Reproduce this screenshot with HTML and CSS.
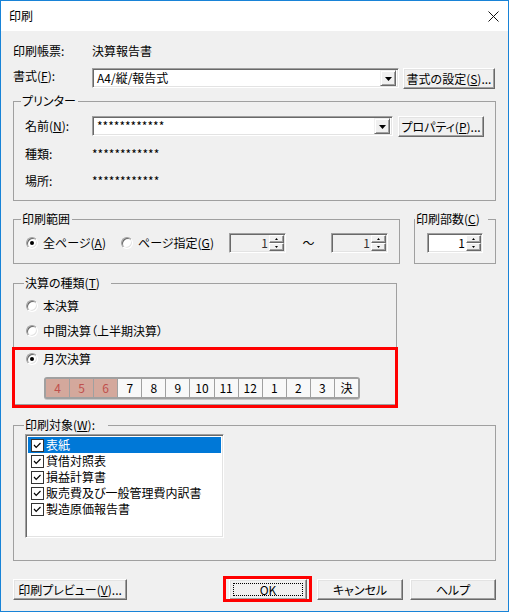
FILE: index.html
```html
<!DOCTYPE html>
<html lang="ja">
<head>
<meta charset="utf-8">
<title>印刷</title>
<link rel="stylesheet" href="styles.css">
</head>
<body>
<div class="window">
  <div class="titlebar">
    <span class="title">印刷</span>
    <svg class="close" width="11" height="11" viewBox="0 0 11 11"><path d="M0.5 0.5 L10.5 10.5 M10.5 0.5 L0.5 10.5" stroke="#111" stroke-width="1" fill="none"/></svg>
  </div>
  <div class="content">
    <div class="row row-report">
      <span class="lbl lbl-top">印刷帳票:</span><span>決算報告書</span>
    </div>
    <div class="row row-format">
      <span class="lbl lbl-top">書式(<u>F</u>):</span>
      <div class="combo sunken combo-format"><span class="combo-text">A4/縦/報告式</span><span class="drop"><svg width="7" height="4" viewBox="0 0 7 4"><path d="M0 0H7L3.5 4Z" fill="#000"/></svg></span></div>
      <button class="btn btn-format">書式の設定(<u>S</u>)...</button>
    </div>

    <fieldset class="group group-printer">
      <legend class="lg-printer">プリンター</legend>
      <div class="row row-name">
        <span class="lbl lbl-printer">名前(<u>N</u>):</span>
        <div class="combo sunken combo-name"><span class="combo-text">************</span><span class="drop"><svg width="7" height="4" viewBox="0 0 7 4"><path d="M0 0H7L3.5 4Z" fill="#000"/></svg></span></div>
        <button class="btn btn-prop">プロパティ(<u>P</u>)...</button>
      </div>
      <div class="row row-info row-kind">
        <span class="lbl lbl-printer">種類:</span><span>************</span>
      </div>
      <div class="row row-info row-place">
        <span class="lbl lbl-printer">場所:</span><span>************</span>
      </div>
    </fieldset>

    <div class="pair">
      <fieldset class="group group-range">
        <legend class="lg-range">印刷範囲</legend>
        <div class="row row-range">
          <span class="opt opt-all"><span class="radio on"></span><span>全ページ(<u>A</u>)</span></span>
          <span class="opt opt-page"><span class="radio"></span><span>ページ指定(<u>G</u>)</span></span>
          <div class="spin sunken disabled"><span class="spin-val">1</span><span class="spin-btns"><span class="sb"><svg width="3" height="2" viewBox="0 0 3 2"><path d="M0 2H3L1.5 0Z" fill="#000"/></svg></span><span class="sb"><svg width="3" height="2" viewBox="0 0 3 2"><path d="M0 0H3L1.5 2Z" fill="#000"/></svg></span></span></div>
          <span class="tilde">～</span>
          <div class="spin sunken disabled"><span class="spin-val">1</span><span class="spin-btns"><span class="sb"><svg width="3" height="2" viewBox="0 0 3 2"><path d="M0 2H3L1.5 0Z" fill="#000"/></svg></span><span class="sb"><svg width="3" height="2" viewBox="0 0 3 2"><path d="M0 0H3L1.5 2Z" fill="#000"/></svg></span></span></div>
        </div>
      </fieldset>
      <fieldset class="group group-copies">
        <legend class="lg-copies">印刷部数(<u>C</u>)</legend>
        <div class="row row-range">
          <div class="spin sunken spin-copies"><span class="spin-val">1</span><span class="spin-btns"><span class="sb"><svg width="3" height="2" viewBox="0 0 3 2"><path d="M0 2H3L1.5 0Z" fill="#000"/></svg></span><span class="sb"><svg width="3" height="2" viewBox="0 0 3 2"><path d="M0 0H3L1.5 2Z" fill="#000"/></svg></span></span></div>
        </div>
      </fieldset>
    </div>

    <fieldset class="group group-type">
      <legend class="lg-type">決算の種類(<u>T</u>)</legend>
      <div class="opt opt-row"><span class="radio"></span><span>本決算</span></div>
      <div class="opt opt-row opt-mid"><span class="radio"></span><span>中間決算（上半期決算）</span></div>
      <div class="monthly">
        <div class="opt opt-row"><span class="radio on"></span><span>月次決算</span></div>
        <div class="months">
          <span class="m past">4</span><span class="m past">5</span><span class="m past">6</span><span class="m">7</span><span class="m">8</span><span class="m">9</span><span class="m">10</span><span class="m">11</span><span class="m">12</span><span class="m">1</span><span class="m">2</span><span class="m">3</span><span class="m">決</span>
        </div>
      </div>
    </fieldset>

    <fieldset class="group group-target">
      <legend class="lg-target">印刷対象(<u>W</u>):</legend>
      <div class="listbox sunken">
        <div class="item sel"><svg class="chk" width="13" height="13" viewBox="0 0 13 13"><rect x="0.5" y="0.5" width="12" height="12" fill="#fff" stroke="#333"/><path d="M3 6 L5.2 8.3 L9.5 4" stroke="#000" stroke-width="1.2" fill="none"/></svg><span>表紙</span></div>
        <div class="item"><svg class="chk" width="13" height="13" viewBox="0 0 13 13"><rect x="0.5" y="0.5" width="12" height="12" fill="#fff" stroke="#333"/><path d="M3 6 L5.2 8.3 L9.5 4" stroke="#000" stroke-width="1.2" fill="none"/></svg><span>貸借対照表</span></div>
        <div class="item"><svg class="chk" width="13" height="13" viewBox="0 0 13 13"><rect x="0.5" y="0.5" width="12" height="12" fill="#fff" stroke="#333"/><path d="M3 6 L5.2 8.3 L9.5 4" stroke="#000" stroke-width="1.2" fill="none"/></svg><span>損益計算書</span></div>
        <div class="item"><svg class="chk" width="13" height="13" viewBox="0 0 13 13"><rect x="0.5" y="0.5" width="12" height="12" fill="#fff" stroke="#333"/><path d="M3 6 L5.2 8.3 L9.5 4" stroke="#000" stroke-width="1.2" fill="none"/></svg><span>販売費及び一般管理費内訳書</span></div>
        <div class="item"><svg class="chk" width="13" height="13" viewBox="0 0 13 13"><rect x="0.5" y="0.5" width="12" height="12" fill="#fff" stroke="#333"/><path d="M3 6 L5.2 8.3 L9.5 4" stroke="#000" stroke-width="1.2" fill="none"/></svg><span>製造原価報告書</span></div>
      </div>
    </fieldset>

    <div class="buttons">
      <button class="btn btn-preview">印刷プレビュー(<u>V</u>)...</button>
      <button class="btn btn-ok">OK</button>
      <button class="btn btn-cancel">キャンセル</button>
      <button class="btn btn-help">ヘルプ</button>
    </div>
  </div>
</div>
</body>
</html>
```

FILE: styles.css
```css
* { box-sizing: border-box; }
html, body { margin: 0; padding: 0; background: #f0f0f0; }
body {
  font-family: "Noto Sans CJK JP", "Noto Sans", sans-serif;
  font-size: 12px;
  line-height: 16px;
  color: #000;
  font-feature-settings: "palt";
}
u { text-decoration: underline; text-underline-offset: 1px; }

.window {
  width: 509px;
  height: 612px;
  border: 1px solid #1883d7;
  background: #f0f0f0;
  display: flex;
  flex-direction: column;
  overflow: hidden;
}
.titlebar {
  flex: none;
  height: 30px;
  background: #fff;
  display: flex;
  align-items: center;
  justify-content: space-between;
  padding: 0 9px 0 8px;
}
.title { font-size: 12px; line-height: 14px; }

.content {
  padding: 12px 12px 0;
  display: flex;
  flex-direction: column;
}

.row { display: flex; align-items: center; white-space: nowrap; }
.lbl { flex: none; }
.lbl-top { width: 79px; }
.lbl-printer { width: 67px; }
.row-report { height: 16px; }
.row-format { margin-top: 9px; height: 21px; align-items: flex-start; }

/* 3D styles */
.sunken {
  border: 1px solid;
  border-color: #a0a0a0 #fff #fff #a0a0a0;
  box-shadow: inset 1px 1px 0 #696969, inset -1px -1px 0 #e3e3e3;
}
.btn {
  flex: none;
  height: 21px;
  margin: 0;
  padding: 0;
  font: inherit;
  line-height: 17px;
  color: #000;
  text-align: center;
  white-space: nowrap;
  background: #f0f0f0;
  border: 1px solid;
  border-color: #fff #696969 #696969 #fff;
  box-shadow: inset -1px -1px 0 #a0a0a0, inset 1px 1px 0 #e3e3e3;
}

/* combo */
.combo {
  flex: none;
  height: 20px;
  background: #fff;
  display: flex;
  align-items: stretch;
  padding: 1px 2px 1px 1px;
}
.combo-text { flex: 1; padding-left: 3px; line-height: 16px; }
.drop {
  width: 16px;
  display: flex;
  align-items: center;
  justify-content: center;
  background: #f0f0f0;
  border: 1px solid;
  border-color: #f0f0f0 #696969 #696969 #f0f0f0;
  box-shadow: inset 1px 1px 0 #fff, inset -1px -1px 0 #a0a0a0;
  padding-top: 1px;
}
.combo-format { width: 307px; }
.btn-format { width: 92px; margin-left: 4px; }

/* groups */
.group {
  margin: 0;
  border: 1px solid #a0a0a0;
  min-inline-size: 0;
}
.group legend {
  font-size: 12px;
  line-height: 14px;
  padding: 0 1px;
  white-space: nowrap;
}
.group-printer { margin-top: 5px; padding: 8px 11px 9px; }
.lg-printer { margin-left: -4px; padding-right: 2px !important; }
.combo-name { width: 301px; }
.btn-prop { width: 86px; margin-left: 5px; }
.row-name { height: 20px; }
.row-info { height: 20px; }
.row-kind { margin-top: 8px; }
.row-place { margin-top: 7px; }

.pair { display: flex; margin-top: 11px; gap: 14px; }
.group-range { width: 387px; padding: 7px 12px 10px; }
.group-copies { width: 82px; padding: 7px 0 10px 12px; }
.lg-range { margin-left: -5px; padding-right: 2px !important; }
.lg-copies { margin-left: -12px; padding-right: 8px !important; }
.row-range { height: 20px; }

.opt { display: flex; align-items: center; gap: 5px; flex: none; white-space: nowrap; }
.opt-all { width: 95px; }
.opt-page { width: 108px; }
.radio {
  flex: none;
  width: 12px;
  height: 12px;
  border-radius: 50%;
  background: #fff;
  border: 1px solid;
  border-color: #a0a0a0 #fff #fff #a0a0a0;
  box-shadow: inset 1px 1px 0 #696969, inset -1px -1px 0 #e3e3e3;
  display: flex;
  align-items: center;
  justify-content: center;
}
.radio.on::after {
  content: "";
  width: 4px;
  height: 4px;
  border-radius: 50%;
  background: #000;
}

.spin {
  flex: none;
  width: 57px;
  height: 20px;
  display: flex;
  padding: 1px;
  background: #fff;
}
.spin.disabled { background: #f0f0f0; color: #333; }
.spin-copies { width: 56px; }
.spin-val { flex: 1; text-align: right; line-height: 16px; padding-right: 1px; }
.spin-btns { width: 15px; display: flex; flex-direction: column; }
.sb {
  flex: 1;
  display: flex;
  align-items: center;
  justify-content: center;
  background: #f0f0f0;
  border: 1px solid;
  border-color: #fff #696969 #696969 #fff;
  box-shadow: inset -1px -1px 0 #a0a0a0;
}
.tilde { width: 45px; text-align: center; flex: none; }

/* type group */
.group-type { width: 384px; margin-top: 12px; padding: 8px 12px 5px; }
.lg-type { margin-left: -2px; padding-right: 11px !important; }
.opt-row { height: 16px; }
.opt-mid { margin-top: 9px; }
.monthly { position: relative; margin-top: 12px; }
.monthly::after {
  content: "";
  position: absolute;
  left: -14px;
  right: -14px;
  top: -4px;
  bottom: -9px;
  border: 3px solid #ff0000;
  pointer-events: none;
}
.months {
  margin-top: 10px;
  margin-left: 18px;
  width: 316px;
  height: 22px;
  display: grid;
  grid-template-columns: repeat(13, 1fr);
  gap: 1px;
  background: #a0a0a0;
  border: 2px solid #a0a0a0;
  border-radius: 3px;
  box-shadow: 0 1px 0 #c8c8c8;
}
.m {
  background: #f8f8f8;
  text-align: center;
  line-height: 18px;
  font-size: 12px;
}
.m.past { background: #d4a89c; color: #c0504d; }

/* target group */
.group-target { margin-top: 13px; padding: 2px 11px 22px; }
.lg-target { margin-left: -1px; padding-right: 13px !important; }
.listbox {
  width: 199px;
  height: 104px;
  background: #fff;
  padding: 2px;
}
.item {
  height: 16px;
  display: flex;
  align-items: center;
  padding-left: 3px;
  gap: 2px;
  white-space: nowrap;
}
.item.sel { background: #0078d7; color: #fff; }
.chk { flex: none; }

/* bottom buttons */
.buttons { display: flex; margin-top: 18px; }
.btn-preview { width: 114px; }
.btn-ok { width: 78px; margin-left: 102px; position: relative; }
.btn-ok::before {
  content: "";
  position: absolute;
  left: 3px; right: 3px; top: 3px; bottom: 3px;
  border: 1px dotted #000;
}
.btn-ok::after {
  content: "";
  position: absolute;
  left: -7px; right: -6px; top: -4px; bottom: -3px;
  border: 3px solid #ff0000;
}
.btn-cancel { width: 86px; margin-left: 10px; }
.btn-help { width: 86px; margin-left: 7px; }
```
